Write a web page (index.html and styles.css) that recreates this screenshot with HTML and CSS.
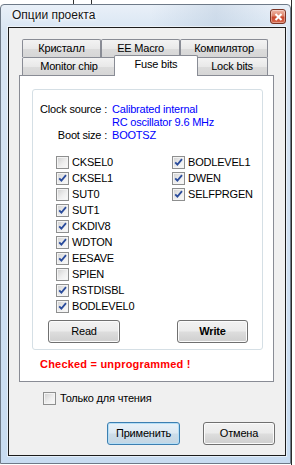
FILE: index.html
```html
<!DOCTYPE html>
<html>
<head>
<meta charset="utf-8">
<title>Опции проекта</title>
<link rel="stylesheet" href="styles.css">
</head>
<body>
<div class="desk">
  <div class="window">
    <div class="titlebar">
      <span class="title">Опции проекта</span>
      <span class="close"><svg width="9" height="8" viewBox="0 0 9 8"><path d="M1.5 1l6 6M7.5 1l-6 6" stroke="#fff" stroke-width="2" fill="none"/></svg></span>
    </div>
    <div class="client">
      <div class="tabs">
        <div class="tabrow">
          <div class="tab t1">Кристалл</div>
          <div class="tab t2">EE Macro</div>
          <div class="tab t3">Компилятор</div>
        </div>
        <div class="tabrow">
          <div class="tab t4">Monitor chip</div>
          <div class="tab t5 sel">Fuse bits</div>
          <div class="tab t6">Lock bits</div>
        </div>
      </div>
      <div class="pane">
        <div class="group">
          <div class="info">
            <span class="k">Clock source :</span>
            <span class="v">Calibrated internal<br>RC oscillator 9.6 MHz</span>
            <span class="k">Boot size :</span>
            <span class="v">BOOTSZ</span>
          </div>
          <div class="fuses">
            <div class="col">
              <div class="cbrow"><span class="cb"></span>CKSEL0</div>
              <div class="cbrow"><span class="cb"><svg viewBox="0 0 11 11"><path d="M2.2 5.3l2.2 2.4L9 2.2"/></svg></span>CKSEL1</div>
              <div class="cbrow"><span class="cb"></span>SUT0</div>
              <div class="cbrow"><span class="cb"><svg viewBox="0 0 11 11"><path d="M2.2 5.3l2.2 2.4L9 2.2"/></svg></span>SUT1</div>
              <div class="cbrow"><span class="cb"><svg viewBox="0 0 11 11"><path d="M2.2 5.3l2.2 2.4L9 2.2"/></svg></span>CKDIV8</div>
              <div class="cbrow"><span class="cb"><svg viewBox="0 0 11 11"><path d="M2.2 5.3l2.2 2.4L9 2.2"/></svg></span>WDTON</div>
              <div class="cbrow"><span class="cb"><svg viewBox="0 0 11 11"><path d="M2.2 5.3l2.2 2.4L9 2.2"/></svg></span>EESAVE</div>
              <div class="cbrow"><span class="cb"></span>SPIEN</div>
              <div class="cbrow"><span class="cb"><svg viewBox="0 0 11 11"><path d="M2.2 5.3l2.2 2.4L9 2.2"/></svg></span>RSTDISBL</div>
              <div class="cbrow"><span class="cb"><svg viewBox="0 0 11 11"><path d="M2.2 5.3l2.2 2.4L9 2.2"/></svg></span>BODLEVEL0</div>
            </div>
            <div class="col">
              <div class="cbrow"><span class="cb"><svg viewBox="0 0 11 11"><path d="M2.2 5.3l2.2 2.4L9 2.2"/></svg></span>BODLEVEL1</div>
              <div class="cbrow"><span class="cb"><svg viewBox="0 0 11 11"><path d="M2.2 5.3l2.2 2.4L9 2.2"/></svg></span>DWEN</div>
              <div class="cbrow"><span class="cb"><svg viewBox="0 0 11 11"><path d="M2.2 5.3l2.2 2.4L9 2.2"/></svg></span>SELFPRGEN</div>
            </div>
          </div>
          <div class="actions">
            <button class="btn">Read</button>
            <button class="btn bold write">Write</button>
          </div>
        </div>
        <p class="note">Checked = unprogrammed !</p>
      </div>
      <div class="ro"><span class="cb"></span>Только для чтения</div>
      <div class="footer">
        <button class="btn def apply">Применить</button>
        <button class="btn cancel">Отмена</button>
      </div>
    </div>
  </div>
</div>
</body>
</html>
```
FILE: styles.css
```css
* { box-sizing: border-box; }
html, body { margin: 0; padding: 0; }
body {
  width: 295px;
  height: 465px;
  overflow: hidden;
  background: #ffffff;
  font-family: "Liberation Sans", Arial, sans-serif;
  font-size: 11px;
  letter-spacing: -0.2px;
  color: #000;
}
.desk {
  width: 295px;
  height: 465px;
  padding-top: 4px;
  background: linear-gradient(to right, transparent 73px, #333 73px, #333 74px, transparent 74px, transparent 91px, #333 91px, #333 92px, transparent 92px) top / 100% 4px no-repeat,
              linear-gradient(to right, transparent 291px, #2a2a2a 291px, #2a2a2a 292px, transparent 292px);
}
.window {
  width: 291px;
  height: 460px;
  border: 1px solid #6e7a88;
  border-radius: 4px 4px 0 0;
  background: linear-gradient(to right, rgba(255,255,255,0) 150px, rgba(170,190,212,0.35) 215px, rgba(255,255,255,0) 275px) top / 100% 24px no-repeat,
              linear-gradient(#e9f0f8, #d8e5f3 26px, #cfe0f2 60%, #c8dcf1);
  padding: 0 4px 7px 7px;
  display: flex;
  flex-direction: column;
}
.titlebar {
  height: 22px;
  display: flex;
  justify-content: space-between;
  align-items: flex-start;
}
.title {
  padding: 3px 0 0 4px;
  font-size: 12px;
  line-height: 15px;
  letter-spacing: 0;
  color: #151515;
  text-shadow: 0 0 5px #fff, 0 0 3px #fff;
}
.close {
  margin-top: 4px;
  width: 16px;
  height: 15px;
  border: 1px solid #7b3424;
  border-radius: 3px;
  background: linear-gradient(#efb8a8, #de8268 45%, #c9472c 55%, #d76a4f);
  display: flex;
  align-items: center;
  justify-content: center;
  box-shadow: inset 0 0 0 1px rgba(255,255,255,0.35);
}
.close svg { display: block; }
.client {
  height: 429px;
  border: 1px solid #1c1c1c;
  background: #f0f0f0;
  padding-top: 11px;
  box-shadow: 0 0 0 1px rgba(255,255,255,0.5);
}
.tabs { margin-left: 13px; width: 246px; }
.tabrow { display: flex; height: 18px; }
.tab {
  flex: none;
  height: 18px;
  border: 1px solid #898c95;
  border-bottom: 0;
  border-radius: 2px 2px 0 0;
  background: linear-gradient(#f3f3f3, #e9e9e9 50%, #dcdcdc 52%, #d6d6d6);
  text-align: center;
  padding-top: 2px;
  line-height: 13px;
  white-space: nowrap;
}
.t1 { width: 79px; }
.t2 { width: 79px; }
.t3 { width: 88px; }
.t4 { width: 94px; }
.t5 { width: 80px; }
.t6 { width: 72px; }
.tab.sel {
  position: relative;
  top: -2px;
  height: 21px;
  width: 84px;
  margin: 0 -2px;
  background: #fff;
  z-index: 2;
  padding-top: 2px;
}
.pane {
  margin-left: 10px;
  width: 255px;
  height: 307px;
  border: 1px solid #898c95;
  background: #fff;
  overflow: hidden;
}
.group {
  margin: 13px 0 0 12px;
  width: 231px;
  border: 1px solid #d5dfe5;
  border-radius: 3px;
  padding: 13px 0 6px 0;
}
.info {
  display: grid;
  grid-template-columns: 74px 1fr;
  column-gap: 5px;
  line-height: 13px;
  align-items: start;
}
.k { text-align: right; white-space: nowrap; }
.v { color: #0000ff; white-space: nowrap; }
.fuses {
  margin-top: 12px;
  padding-left: 23px;
  display: flex;
}
.col { flex: none; width: 116px; }
.cbrow, .ro {
  display: flex;
  align-items: center;
  height: 16px;
  gap: 3px;
  white-space: nowrap;
}
.cb {
  flex: none;
  width: 13px;
  height: 13px;
  border: 1px solid #8e8f8f;
  background: linear-gradient(135deg, #cfcfcf, #eeeeee 55%, #fbfbfb);
  box-shadow: inset 0 0 0 1px #f4f4f4;
}
.cb svg { display: block; width: 11px; height: 11px; }
.cb path { fill: none; stroke: #2a4c9c; stroke-width: 1.8; }
.actions {
  display: flex;
  margin-top: 6px;
  padding-left: 15px;
}
.btn {
  flex: none;
  width: 72px;
  height: 23px;
  padding: 0;
  margin: 0;
  border: 1px solid #707070;
  border-radius: 3px;
  background: linear-gradient(#f2f2f2, #ebebeb 48%, #dddddd 52%, #cfcfcf);
  box-shadow: inset 0 0 0 1px #fbfbfb;
  font-family: "Liberation Sans", Arial, sans-serif;
  font-size: 11px;
  font-weight: normal;
  letter-spacing: -0.2px;
  color: #000;
  line-height: 13px;
}
.btn.bold { font-weight: bold; }
.write { margin-left: 57px; width: 71px; }
.note {
  margin: 8px 0 0 20px;
  font-weight: bold;
  color: #ff0000;
  line-height: 13px;
  letter-spacing: 0.2px;
  white-space: nowrap;
}
.ro {
  margin: 8px 0 0 34px;
  gap: 4px;
}
.footer {
  display: flex;
  justify-content: flex-end;
  gap: 23px;
  margin-top: 16px;
  padding-right: 10px;
}
.apply { width: 73px; }
.def {
  border-color: #3c7fb1;
  background: linear-gradient(#e9f2f9, #dde9f2 48%, #cddde9 52%, #c3d6e4);
  box-shadow: inset 0 0 0 1px #b4def6;
}
```
